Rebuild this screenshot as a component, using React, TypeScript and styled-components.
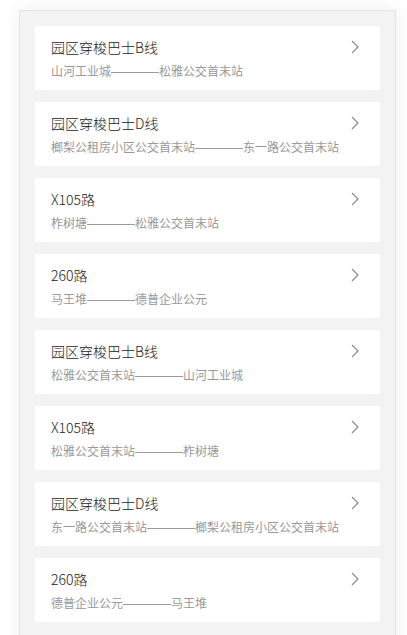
import styled, { createGlobalStyle } from "styled-components";

type Route = {
  name: string;
  from: string;
  to: string;
};

const routes: Route[] = [
  { name: "园区穿梭巴士B线", from: "山河工业城", to: "松雅公交首末站" },
  { name: "园区穿梭巴士D线", from: "榔梨公租房小区公交首末站", to: "东一路公交首末站" },
  { name: "X105路", from: "柞树塘", to: "松雅公交首末站" },
  { name: "260路", from: "马王堆", to: "德普企业公元" },
  { name: "园区穿梭巴士B线", from: "松雅公交首末站", to: "山河工业城" },
  { name: "X105路", from: "松雅公交首末站", to: "柞树塘" },
  { name: "园区穿梭巴士D线", from: "东一路公交首末站", to: "榔梨公租房小区公交首末站" },
  { name: "260路", from: "德普企业公元", to: "马王堆" },
];

function Chevron() {
  return (
    <svg width="8" height="14" viewBox="0 0 8 14" fill="none">
      <path d="M1 1l6 6-6 6" stroke="#8c8c8c" strokeWidth="1.2" />
    </svg>
  );
}

function App() {
  return (
    <>
      <GlobalStyle />
      <Panel>
        {routes.map((route, i) => (
          <Card key={i}>
            <Item>
              <TitleRow>
                <Title>{route.name}</Title>
                <Chevron />
              </TitleRow>
              <Stops>
                {route.from}
                <Dash>————</Dash>
                {route.to}
              </Stops>
            </Item>
          </Card>
        ))}
      </Panel>
    </>
  );
}

export default App;

const GlobalStyle = createGlobalStyle`
  html, body {
    margin: 0;
    padding: 0;
    background: #ffffff;
    font-family: "Noto Sans CJK SC", "Noto Sans", sans-serif;
  }
  * {
    box-sizing: border-box;
  }
`;

const Panel = styled.div`
  width: 377px;
  min-height: 640px;
  margin: 10px 0 0 19px;
  padding: 15px 15px;
  background: #f3f3f3;
  border: 1px solid #e4e4e4;
  box-shadow: 0 0 16px rgba(0, 0, 0, 0.07);
  display: flex;
  flex-direction: column;
  gap: 12px;
`;

const Card = styled.div`
  height: 64px;
  padding: 0 16px;
  background: #ffffff;
`;

const Item = styled.div`
  height: 65px;
  padding-top: 11px;
  background: #ffffff;
  border-bottom: 1px solid #f6f6f6;
`;

const TitleRow = styled.div`
  display: flex;
  align-items: center;
  justify-content: space-between;
  padding-right: 5px;
  height: 20px;
`;

const Title = styled.div`
  font-size: 14px;
  font-weight: 300;
  line-height: 20px;
  color: #222222;
`;

const Stops = styled.div`
  margin-top: 6px;
  font-size: 12px;
  line-height: 16px;
  color: #999999;
  white-space: nowrap;
`;

const Dash = styled.span`
  font-family: "Liberation Sans", sans-serif;
  color: #9a9a9a;
`;
